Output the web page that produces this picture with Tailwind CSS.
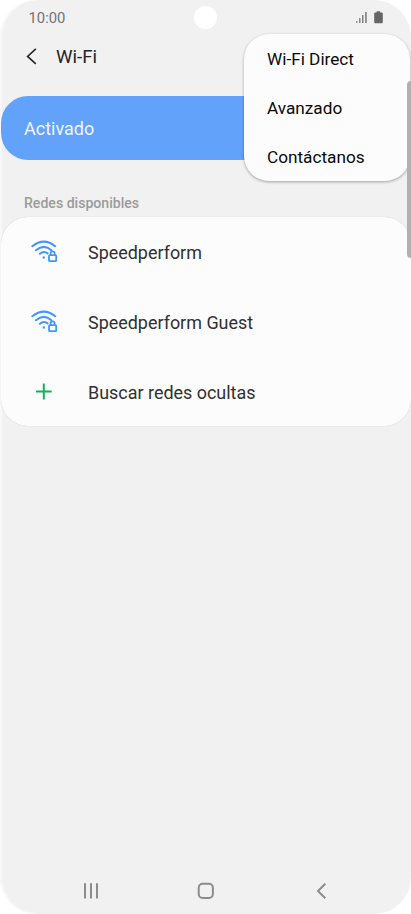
<!DOCTYPE html>
<html lang="es">
<head>
<meta charset="utf-8">
<meta name="viewport" content="width=device-width, initial-scale=1">
<title>Wi-Fi</title>
<script src="https://cdn.jsdelivr.net/npm/@tailwindcss/browser@4"></script>
</head>
<body class="bg-white overflow-hidden font-[Roboto,sans-serif]">
<div class="relative flex flex-col w-[411px] h-[914px] bg-[#f1f1f1] rounded-[37px] overflow-hidden pl-px shadow-[inset_2px_0_0_#f8f8f8]">
  <header class="flex h-9 items-center justify-between pl-[27.5px] pr-[26px] text-[14.8px] text-[#717171]">
    <span class="w-16 leading-5">10:00</span>
    <svg class="h-5 w-[30px]" viewBox="0 0 30 20" fill="#666">
      <path fill="#999" d="M1 13h1.5v2H1z"/><path fill="#888" d="M4 10h1.5v5H4z"/><path fill="#808080" d="M7 7h1.5v8H7z"/><path fill="#777" d="M10.2 4h1.5v11h-1.5z"/>
      <path d="M21.7 3.2h3.4v1.2h1.5q1.2 0 1.2.8v9.1q0 .9-.9.9h-6.8q-.9 0-.9-.9V5.2q0-.8 1.2-.8h1.3z"/>
    </svg>
  </header>
  <div class="absolute left-[194px] top-[6px] size-[23px] rounded-full bg-white"></div>

  <div class="flex h-[60px] items-start pl-[25px] pt-[9px]">
    <svg class="mt-[3px] h-5 w-[14px]" viewBox="0 0 14 20" fill="none" stroke="#252525" stroke-width="1.6"><path d="M9.8 .9 1.6 8.4l8.2 7.4"/></svg>
    <h1 class="ml-4 text-[18.6px] leading-6 text-[#252525]">Wi-Fi</h1>
  </div>

  <div class="mt-[.3px] flex h-[64px] shrink-0 items-center rounded-[27px] bg-[#62a2fb] pl-[23px] text-[18px] text-[#f1f6ff]"><span>Activado</span></div>

  <h2 class="flex h-[56.7px] items-end pl-[23px] pb-[3.7px] text-[14.1px] font-medium leading-5 text-[#9b9b9b]">Redes disponibles</h2>

  <ul class="h-[209px] shrink-0 rounded-[27px] bg-[#fcfcfc] text-[17.95px] text-[#303030] shadow-[0_0_1px_#0003]">
    <li class="flex h-[70px] items-center pl-[29px]">
      <svg class="h-[26px] w-[29px]" viewBox="0 0 29 26" fill="none" stroke="#4296fc" stroke-width="2" stroke-linecap="round">
        <path d="M2.3 7.2Q14 -2 25.2 7.2M5.9 11.2Q14 4.6 21.4 11.2M9.9 14.8Q14 11.5 17.6 14.4"/><circle cx="13.8" cy="18.5" r="1.2" fill="#4296fc" stroke="none"/>
        <rect x="19" y="16.2" width="7.2" height="6" rx=".8" stroke-width="1.8"/><path d="M20.6 16v-1.7a2 2 0 0 1 4 0V16" stroke-width="1.7"/>
      </svg>
      <span class="ml-[29px] pt-[2px]">Speedperform</span>
    </li>
    <li class="flex h-[70px] items-center pl-[29px]">
      <svg class="h-[26px] w-[29px]" viewBox="0 0 29 26" fill="none" stroke="#4296fc" stroke-width="2" stroke-linecap="round">
        <path d="M2.3 7.2Q14 -2 25.2 7.2M5.9 11.2Q14 4.6 21.4 11.2M9.9 14.8Q14 11.5 17.6 14.4"/><circle cx="13.8" cy="18.5" r="1.2" fill="#4296fc" stroke="none"/>
        <rect x="19" y="16.2" width="7.2" height="6" rx=".8" stroke-width="1.8"/><path d="M20.6 16v-1.7a2 2 0 0 1 4 0V16" stroke-width="1.7"/>
      </svg>
      <span class="ml-[29px] pt-[2px]">Speedperform Guest</span>
    </li>
    <li class="flex h-[70px] items-center pl-[29px]">
      <svg class="h-[26px] w-[29px]" viewBox="0 0 29 26" stroke="#12b257" stroke-width="2"><path d="M13.8 4.5v16M6 12.5h15.7"/></svg>
      <span class="ml-[29px] pt-[2px]">Buscar redes ocultas</span>
    </li>
  </ul>

  <nav class="mt-auto flex h-[47px] items-center justify-between pl-[81px] pr-[81px]">
    <svg class="size-[18px]" viewBox="0 0 18 18" stroke="#8c8c8c" stroke-width="2"><path d="M3 1.2v15.2M9 1.2v15.2M15 1.2v15.2"/></svg>
    <svg class="size-[18px]" viewBox="0 0 18 18" fill="none" stroke="#8c8c8c" stroke-width="2"><rect x="1.7" y="1.8" width="14.2" height="14.2" rx="4"/></svg>
    <svg class="size-[18px]" viewBox="0 0 18 18" fill="none" stroke="#8c8c8c" stroke-width="2"><path d="M13.3 1.7 6 9l7.3 7.3"/></svg>
  </nav>

  <div class="absolute left-[243.5px] top-[34px] flex h-[147px] w-[166.8px] flex-col rounded-[25px] bg-[#fcfcfc] pl-[23.5px] pt-[1.2px] text-[17.2px] text-[#0a0a0a] shadow-[0_1px_3px_#0005]">
    <span class="flex h-[49px] shrink-0 items-center">Wi-Fi Direct</span>
    <span class="flex h-[49px] shrink-0 items-center">Avanzado</span>
    <span class="flex h-[49px] shrink-0 items-center">Contáctanos</span>
  </div>
  <div class="absolute right-0 top-[81px] h-[177px] w-[4px] rounded-l-[4px] bg-[#b0b0b0]"></div>
</div>
</body>
</html>
